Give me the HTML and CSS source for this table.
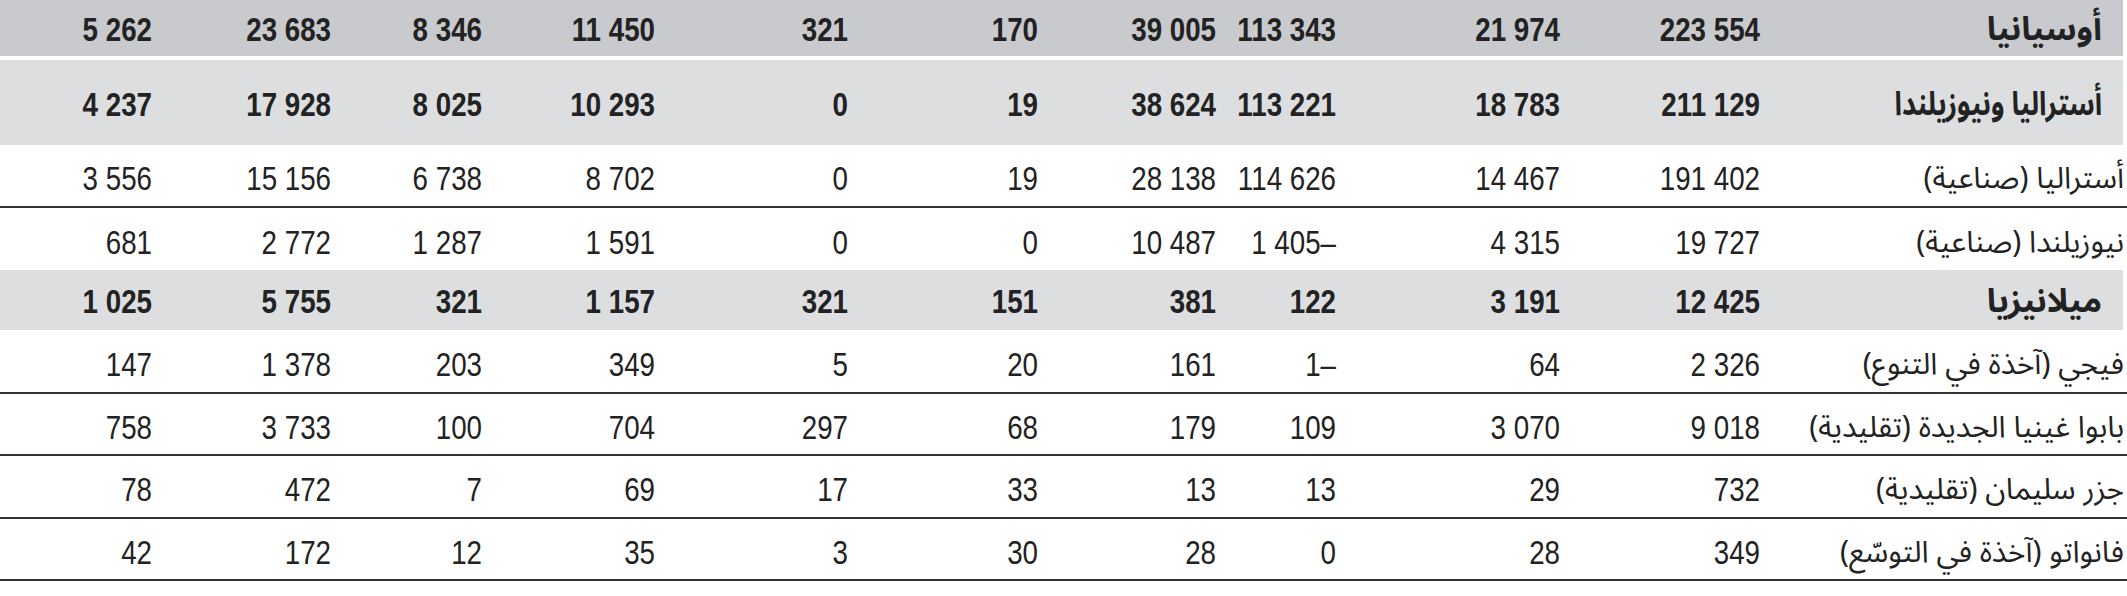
FILE: index.html
```html
<!DOCTYPE html>
<html lang="ar" dir="rtl">
<head>
<meta charset="utf-8">
<title>أوسيانيا</title>
<link rel="stylesheet" href="styles.css">
</head>
<body>
<div class="table">
  <div class="row region">
    <div class="cell label">أوسيانيا</div>
    <div class="cell num">223&nbsp;554</div><div class="cell num">21&nbsp;974</div><div class="cell num">113&nbsp;343</div><div class="cell num">39&nbsp;005</div><div class="cell num">170</div><div class="cell num">321</div><div class="cell num">11&nbsp;450</div><div class="cell num">8&nbsp;346</div><div class="cell num">23&nbsp;683</div><div class="cell num">5&nbsp;262</div>
  </div>
  <div class="row sub tall">
    <div class="cell label"><span class="narrow">أستراليا ونيوزيلندا</span></div>
    <div class="cell num">211&nbsp;129</div><div class="cell num">18&nbsp;783</div><div class="cell num">113&nbsp;221</div><div class="cell num">38&nbsp;624</div><div class="cell num">19</div><div class="cell num">0</div><div class="cell num">10&nbsp;293</div><div class="cell num">8&nbsp;025</div><div class="cell num">17&nbsp;928</div><div class="cell num">4&nbsp;237</div>
  </div>
  <div class="row plain lined h63">
    <div class="cell label">أستراليا (صناعية)</div>
    <div class="cell num">191&nbsp;402</div><div class="cell num">14&nbsp;467</div><div class="cell num">114&nbsp;626</div><div class="cell num">28&nbsp;138</div><div class="cell num">19</div><div class="cell num">0</div><div class="cell num">8&nbsp;702</div><div class="cell num">6&nbsp;738</div><div class="cell num">15&nbsp;156</div><div class="cell num">3&nbsp;556</div>
  </div>
  <div class="row plain h62">
    <div class="cell label">نيوزيلندا (صناعية)</div>
    <div class="cell num">19&nbsp;727</div><div class="cell num">4&nbsp;315</div><div class="cell num">–1&nbsp;405</div><div class="cell num">10&nbsp;487</div><div class="cell num">0</div><div class="cell num">0</div><div class="cell num">1&nbsp;591</div><div class="cell num">1&nbsp;287</div><div class="cell num">2&nbsp;772</div><div class="cell num">681</div>
  </div>
  <div class="row sub h60">
    <div class="cell label">ميلانيزيا</div>
    <div class="cell num">12&nbsp;425</div><div class="cell num">3&nbsp;191</div><div class="cell num">122</div><div class="cell num">381</div><div class="cell num">151</div><div class="cell num">321</div><div class="cell num">1&nbsp;157</div><div class="cell num">321</div><div class="cell num">5&nbsp;755</div><div class="cell num">1&nbsp;025</div>
  </div>
  <div class="row plain lined h64">
    <div class="cell label">فيجي (آخذة في التنوع)</div>
    <div class="cell num">2&nbsp;326</div><div class="cell num">64</div><div class="cell num">–1</div><div class="cell num">161</div><div class="cell num">20</div><div class="cell num">5</div><div class="cell num">349</div><div class="cell num">203</div><div class="cell num">1&nbsp;378</div><div class="cell num">147</div>
  </div>
  <div class="row plain lined h62">
    <div class="cell label">بابوا غينيا الجديدة (تقليدية)</div>
    <div class="cell num">9&nbsp;018</div><div class="cell num">3&nbsp;070</div><div class="cell num">109</div><div class="cell num">179</div><div class="cell num">68</div><div class="cell num">297</div><div class="cell num">704</div><div class="cell num">100</div><div class="cell num">3&nbsp;733</div><div class="cell num">758</div>
  </div>
  <div class="row plain lined h63">
    <div class="cell label">جزر سليمان (تقليدية)</div>
    <div class="cell num">732</div><div class="cell num">29</div><div class="cell num">13</div><div class="cell num">13</div><div class="cell num">33</div><div class="cell num">17</div><div class="cell num">69</div><div class="cell num">7</div><div class="cell num">472</div><div class="cell num">78</div>
  </div>
  <div class="row plain lined h62">
    <div class="cell label">فانواتو (آخذة في التوسّع)</div>
    <div class="cell num">349</div><div class="cell num">28</div><div class="cell num">0</div><div class="cell num">28</div><div class="cell num">30</div><div class="cell num">3</div><div class="cell num">35</div><div class="cell num">12</div><div class="cell num">172</div><div class="cell num">42</div>
  </div>
</div>
</body>
</html>
```

FILE: styles.css
```css
html, body {
  margin: 0;
  padding: 0;
  background: #ffffff;
}

.table {
  width: 2127px;
  direction: rtl;
  color: #222222;
  font-family: "Liberation Sans", Arial, sans-serif;
  font-size: 33px;
}

.row {
  display: grid;
  grid-template-columns: 367px 200px 224px 120px 178px 190px 193px 173px 151px 179px 152px;
  grid-template-rows: 100%;
  box-sizing: border-box;
  padding-top: 4px;
}

.row.plain {
  padding-top: 7px;
}

.cell {
  display: flex;
  align-items: center;
  justify-content: flex-start;
  white-space: nowrap;
  min-height: 0;
  line-height: 38px;
}

.num {
  transform: scaleX(0.84);
  transform-origin: right center;
}

.label {
  padding-right: 3px;
  font-family: "Noto Sans Arabic", "Noto Kufi Arabic", "DejaVu Sans", sans-serif;
  font-size: 30px;
}

.region .label,
.sub .label {
  padding-right: 25px;
  font-size: 33px;
}

.narrow {
  display: inline-block;
  transform: scaleX(0.82);
  transform-origin: right center;
}

.lined {
  border-bottom: 2px solid #333333;
}

.region {
  height: 56px;
  margin-bottom: 4px;
  background: #c8cacd;
  font-weight: bold;
  box-shadow: inset -4px 0 0 #ffffff;
}

.sub {
  background: #dcdee0;
  font-weight: bold;
  box-shadow: inset -4px 0 0 #ffffff;
}

.tall { height: 85px; }
.h60 { height: 60px; }
.h62 { height: 62px; }
.h63 { height: 63px; }
.h64 { height: 64px; }
```
